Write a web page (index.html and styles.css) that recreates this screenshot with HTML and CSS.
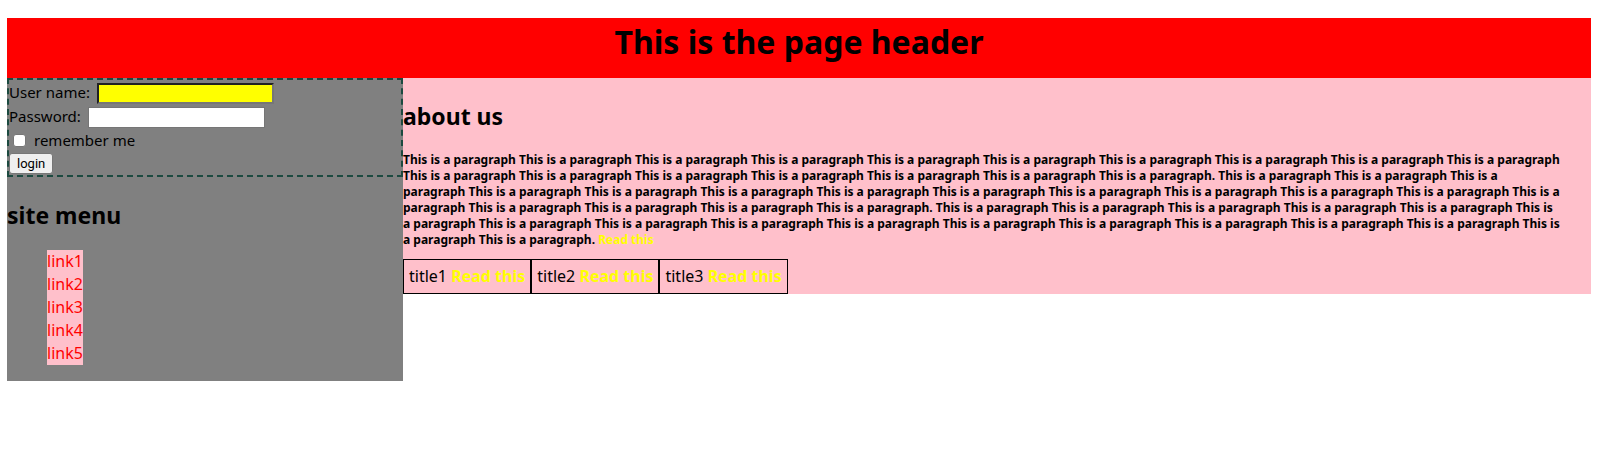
FILE: index.html
```
<!DOCTYPE html>
<html lang="en">
<head>
<meta charset="utf-8">
<title>This is the page header</title>
<link rel="stylesheet" href="styles.css">
</head>
<body>
<header class="page-header"><h1 class="page-title">This is the page header</h1></header>
<div class="columns">
  <aside class="sidebar">
    <form class="login">
      <div class="row"><label for="user">User name:</label><input class="field field-user" id="user" type="text"></div>
      <div class="row"><label for="pass">Password:</label><input class="field" id="pass" type="password"></div>
      <div class="row"><input class="tick" id="remember" type="checkbox"><label for="remember">remember me</label></div>
      <div class="row"><button class="submit" type="button">login</button></div>
    </form>
    <nav>
      <h2 class="heading">site menu</h2>
      <ul class="menu">
        <li><a class="menu-link" href="#">link1</a></li>
        <li><a class="menu-link" href="#">link2</a></li>
        <li><a class="menu-link" href="#">link3</a></li>
        <li><a class="menu-link" href="#">link4</a></li>
        <li><a class="menu-link" href="#">link5</a></li>
      </ul>
    </nav>
  </aside>
  <main class="content">
    <h2 class="heading">about us</h2>
    <p class="about">
      This is a paragraph This is a paragraph This is a paragraph This is a paragraph This is a paragraph This is a paragraph This is a paragraph This is a paragraph This is a paragraph This is a paragraph<br>
      This is a paragraph This is a paragraph This is a paragraph This is a paragraph This is a paragraph This is a paragraph This is a paragraph. This is a paragraph This is a paragraph This is a<br>
      paragraph This is a paragraph This is a paragraph This is a paragraph This is a paragraph This is a paragraph This is a paragraph This is a paragraph This is a paragraph This is a paragraph This is a<br>
      paragraph This is a paragraph This is a paragraph This is a paragraph This is a paragraph. This is a paragraph This is a paragraph This is a paragraph This is a paragraph This is a paragraph This is<br>
      a paragraph This is a paragraph This is a paragraph This is a paragraph This is a paragraph This is a paragraph This is a paragraph This is a paragraph This is a paragraph This is a paragraph This is<br>
      a paragraph This is a paragraph. <a class="read" href="#">Read this</a>
    </p>
    <div class="titles">
      <div class="title">title1 <a class="read" href="#">Read this</a></div>
      <div class="title">title2 <a class="read" href="#">Read this</a></div>
      <div class="title">title3 <a class="read" href="#">Read this</a></div>
    </div>
  </main>
</div>
</body>
</html>
```
FILE: styles.css
```
* { box-sizing: border-box; }
body {
  margin: 18px 8px 8px 7px;
  background: white;
  color: black;
  font-family: "Comic Sans MS", "Noto Sans", sans-serif;
  font-size: 16px;
  line-height: 23px;
}
.page-header { background: red; padding-bottom: 12px; }
.page-title { margin: 0; font-size: 32px; line-height: 48px; text-align: center; }
.columns { display: flex; align-items: flex-start; }
.sidebar { width: 25%; flex: none; background: gray; }
.login { border: 2px dashed #1c4a40; font-size: 15px; }
.row { display: flex; align-items: flex-end; height: 24px; }
.row:last-child { height: 23px; padding-bottom: 1px; }
.field {
  width: 177px;
  height: 21px;
  margin-left: 7px;
  padding: 1px 2px;
  border: 1px solid #767676;
  background: white;
}
.field-user { border: 2px inset #767676; background: yellow; }
.tick {
  appearance: none;
  width: 13px;
  height: 13px;
  margin: 0 8px 5px 4px;
  border: 1px solid #767676;
  border-radius: 3px;
  background: white;
}
.tick:checked { background: #0075ff; }
.submit {
  height: 21px;
  padding: 0 7px;
  border: 1px solid #767676;
  border-radius: 3px;
  background: #efefef;
  color: black;
  font: 13px/19px Roboto, Arial, sans-serif;
}
.heading { margin: 22px 0 18px; font-size: 23px; line-height: 33px; }
.menu { margin: 0; padding: 0 0 16px 40px; list-style: none; }
.menu li { display: flex; }
.menu-link { background: pink; color: red; text-decoration: none; }
.content { flex: 1; min-width: 0; display: flow-root; background: pink; }
.about { margin: 0 0 11px; padding-top: 1px; font-size: 12px; line-height: 16px; font-weight: bold; }
.titles { display: flex; }
.title { padding: 5px; border: 1px solid black; }
.read { color: yellow; font-weight: bold; text-decoration: none; }
```
